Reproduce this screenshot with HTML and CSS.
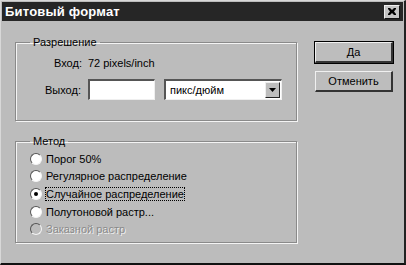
FILE: index.html
```html
<!DOCTYPE html>
<html lang="ru">

<head>
    <meta charset="UTF-8">
    <title>Битовый формат</title>
    <link rel="stylesheet" href="styles.css">
</head>

<body>
    <div class="dialog">
        <div class="titlebar">
            <span class="title">Битовый формат</span>
            <span class="close-btn">
                <svg width="8" height="7" viewBox="0 0 8 7">
                    <path d="M0 0h2l2 2 2-2h2v1l-2 2.5 2 2.5v1h-2l-2-2-2 2h-2v-1l2-2.5-2-2.5z" fill="#000" />
                </svg>
            </span>
        </div>

        <div class="content">
            <div class="left-col">
                <fieldset class="group group-res">
                    <legend>Разрешение</legend>
                    <div class="row-in">
                        <span>Вход:</span>
                        <span>72 pixels/inch</span>
                    </div>
                    <div class="row-out">
                        <span class="out-label">Выход:</span>
                        <span class="textbox"></span>
                        <span class="select">
                            <span class="select-text">пикс/дюйм</span>
                            <span class="select-btn">
                                <svg width="7" height="4" viewBox="0 0 7 4">
                                    <path d="M0 0h7l-3.5 4z" fill="#000" />
                                </svg>
                            </span>
                        </span>
                    </div>
                </fieldset>

                <fieldset class="group group-method">
                    <legend>Метод</legend>
                    <div class="radio"><span class="dot"></span><span>Порог 50%</span></div>
                    <div class="radio"><span class="dot"></span><span>Регулярное распределение</span></div>
                    <div class="radio"><span class="dot checked"></span><span class="focused">Случайное распределение</span></div>
                    <div class="radio"><span class="dot"></span><span>Полутоновой растр...</span></div>
                    <div class="radio disabled"><span class="dot"></span><span>Заказной растр</span></div>
                </fieldset>
            </div>

            <div class="right-col">
                <div class="btn btn-default"><span>Да</span></div>
                <div class="btn"><span>Отменить</span></div>
            </div>
        </div>
    </div>
</body>

</html>
```

FILE: styles.css
```css
* {
    box-sizing: border-box;
}

body {
    margin: 0;
    background-color: #000;
    font-family: "Liberation Sans", Arial, sans-serif;
    font-size: 11px;
    color: #000;
}

.dialog {
    width: 406px;
    height: 265px;
    background-color: #bcbcbc;
    border-top: 1px solid #d8d8d8;
    border-left: 1px solid #d8d8d8;
    border-right: 2px solid #222;
    border-bottom: 2px solid #111;
    padding: 1px 1px 0 1px;
}

.titlebar {
    height: 19px;
    background-color: #262626;
    display: flex;
    align-items: center;
    justify-content: space-between;
    padding: 0 3px 0 3px;
}

.title {
    color: #fff;
    font-weight: bold;
    font-size: 13px;
    letter-spacing: 0.2px;
}

.close-btn {
    width: 16px;
    height: 14px;
    background-color: #c4c4c4;
    border-top: 1px solid #f0f0f0;
    border-left: 1px solid #f0f0f0;
    border-right: 1px solid #111;
    border-bottom: 1px solid #111;
    display: flex;
    align-items: center;
    justify-content: center;
}

.content {
    display: flex;
    padding: 15px 0 0 13px;
}

.left-col {
    width: 282px;
}

.group {
    margin: 0;
    border: 1px solid #8a8a8a;
    box-shadow: inset 1px 1px 0 #f4f4f4, 1px 1px 0 #f4f4f4;
    padding: 0 0 0 13px;
}

.group legend {
    padding: 0 3px;
    margin-left: 1px;
}

.group-res {
    height: 85px;
}

.row-in {
    display: flex;
    gap: 6px;
    margin: 9px 0 0 25px;
}

.row-out {
    display: flex;
    align-items: center;
    margin: 10px 0 0 16px;
}

.out-label {
    width: 43px;
}

.textbox,
.select {
    height: 21px;
    background-color: #fff;
    border-top: 2px solid #555;
    border-left: 2px solid #555;
    border-right: 1px solid #efefef;
    border-bottom: 1px solid #efefef;
}

.textbox {
    width: 67px;
}

.select {
    width: 118px;
    margin-left: 9px;
    display: flex;
    align-items: center;
    justify-content: space-between;
    padding: 0 1px 0 4px;
}

.select-btn {
    width: 15px;
    height: 16px;
    background-color: #bdbdbd;
    border-top: 1px solid #eee;
    border-left: 1px solid #eee;
    border-right: 1px solid #222;
    border-bottom: 1px solid #222;
    display: flex;
    align-items: center;
    justify-content: center;
}

.group-method {
    margin-top: 14px;
    height: 108px;
    padding-top: 3px;
}

.radio {
    display: flex;
    align-items: center;
    gap: 4px;
    height: 17.6px;
    margin-left: 1px;
}

.dot {
    width: 12px;
    height: 12px;
    border-radius: 50%;
    background-color: #fff;
    border: 1px solid;
    border-color: #555 #f4f4f4 #f4f4f4 #555;
    display: flex;
    align-items: center;
    justify-content: center;
}

.dot.checked::after {
    content: "";
    width: 4px;
    height: 4px;
    border-radius: 50%;
    background-color: #000;
}

.focused {
    outline: 1px dotted #000;
}

.radio.disabled {
    color: #8a8a8a;
    text-shadow: 1px 1px 0 #efefef;
}

.radio.disabled .dot {
    background-color: #bcbcbc;
}

.right-col {
    display: flex;
    flex-direction: column;
    gap: 8px;
    margin: 6px 0 0 18px;
}

.btn {
    width: 78px;
    height: 21px;
    background-color: #bdbdbd;
    border-top: 1px solid #f0f0f0;
    border-left: 1px solid #f0f0f0;
    border-right: 2px solid #333;
    border-bottom: 2px solid #333;
    display: flex;
    align-items: center;
    justify-content: center;
}

.btn-default {
    outline: 1px solid #000;
}
```
